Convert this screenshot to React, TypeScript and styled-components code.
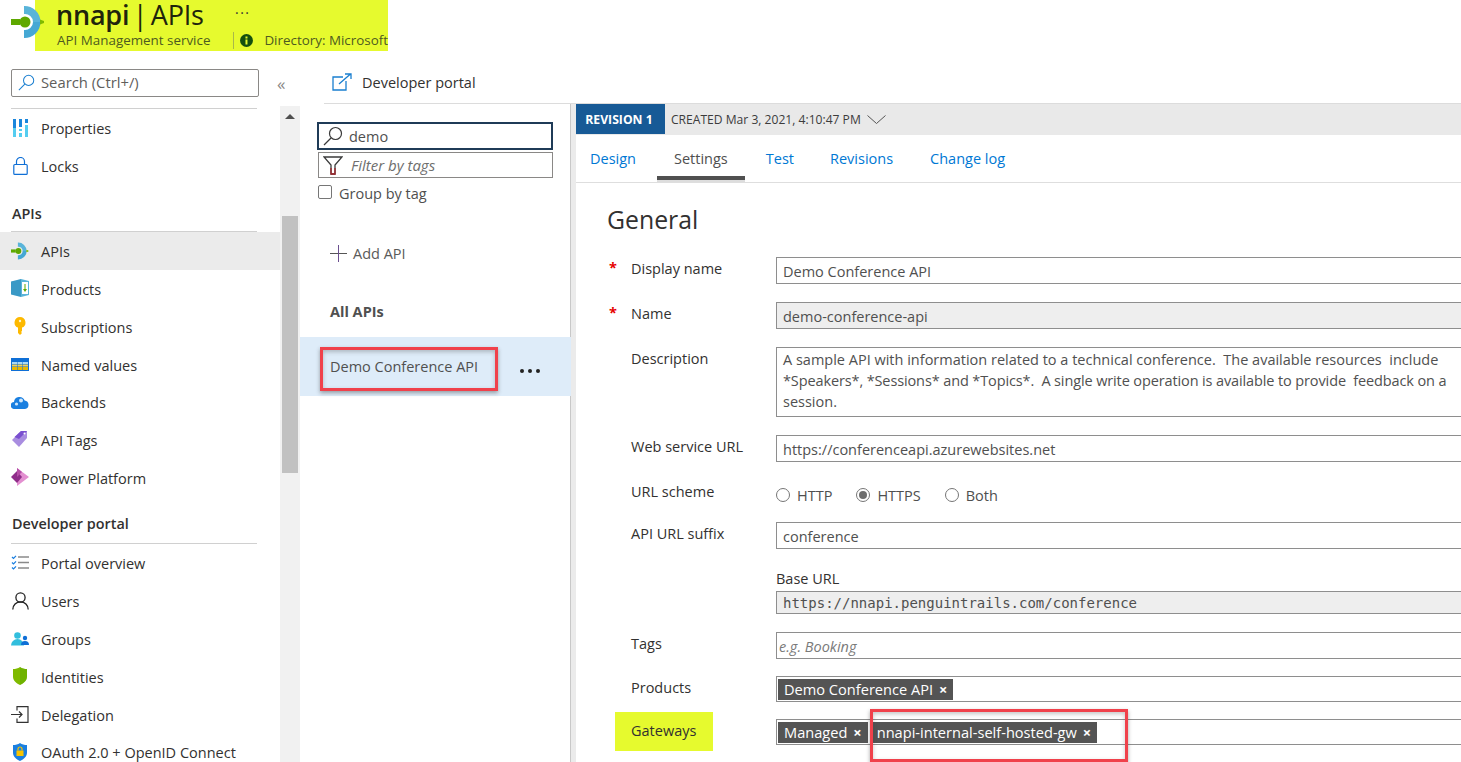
import { ReactNode } from "react";
import styled, { createGlobalStyle } from "styled-components";

const FONT = `"Open Sans", "Noto Sans", sans-serif`;

const GlobalStyle = createGlobalStyle`
  html, body {
    margin: 0;
    padding: 0;
    background: #fff;
  }
  body {
    font-family: ${FONT};
    font-size: 14.5px;
    color: #323130;
  }
  * {
    box-sizing: border-box;
  }
`;

const Page = styled.div`
  position: relative;
  width: 1461px;
  height: 762px;
  overflow: hidden;
  display: flex;
  flex-direction: column;
`;

const Header = styled.header`
  position: relative;
  height: 69px;
  flex: none;
`;

const LogoSlot = styled.div`
  position: absolute;
  left: 11px;
  top: 5px;
  width: 34px;
  height: 34px;
`;

const Highlight = styled.div`
  margin-left: 35px;
  width: 353px;
  height: 51px;
  background: #e6fa2e;
  overflow: hidden;
  padding-left: 22px;
  white-space: nowrap;
`;

const TitleRow = styled.div`
  display: flex;
  height: 29px;
  align-items: center;
`;

const Title = styled.h1`
  margin: 0 0 0 -1px;
  font-size: 27px;
  line-height: 29px;
  font-weight: 400;
  color: #20240c;
  width: 179px;
  letter-spacing: -0.2px;
  word-spacing: -3.4px;
  b {
    font-weight: 600;
  }
`;

const More = styled.span`
  font-size: 14px;
  line-height: 12px;
  letter-spacing: 1.5px;
  color: #333;
  margin-top: -3px;
`;

const SubRow = styled.div`
  display: flex;
  align-items: center;
  height: 22px;
  font-size: 13.4px;
  color: #4e5a20;
`;

const SubName = styled.span`
  width: 177px;
`;

const SubDivider = styled.span`
  width: 1px;
  height: 17px;
  background: #a9b84a;
  margin-right: 6px;
`;

const DirectoryText = styled.span`
  margin-left: 11px;
`;

const Body = styled.div`
  display: flex;
  flex: 1;
  min-height: 0;
`;

const Sidebar = styled.aside`
  width: 300px;
  flex: none;
  display: flex;
  flex-direction: column;
  min-height: 0;
`;

const SearchRow = styled.div`
  display: flex;
  align-items: center;
  height: 28px;
  padding-left: 11px;
  flex: none;
`;

const SearchBox = styled.div`
  width: 248px;
  height: 28px;
  border: 1px solid #8a8886;
  border-radius: 2px;
  display: flex;
  align-items: center;
  gap: 6px;
  padding: 0 0 2px 6px;
  font-size: 14.8px;
  color: #605e5c;
`;

const Collapse = styled.span`
  margin-left: 18px;
  font-size: 17px;
  line-height: 17px;
  color: #8a8886;
`;

const SideBody = styled.div`
  display: flex;
  flex: 1;
  min-height: 0;
  margin-top: 9px;
`;

const Nav = styled.nav`
  width: 280px;
  flex: none;
  overflow: hidden;
  padding-top: 2px;
`;

const NavRule = styled.div`
  height: 1px;
  margin: 0 23px 0 11px;
  background: #d0d0d0;
`;

const NavHeading = styled.div<{ $top: number; $height: number }>`
  margin: ${(p) => p.$top}px 0 0 12px;
  height: ${(p) => p.$height}px;
  font-weight: 600;
  font-size: 14.4px;
  line-height: 20px;
  color: #323130;
`;

const NavItem = styled.div<{ $active?: boolean }>`
  display: flex;
  align-items: center;
  height: 37.8px;
  padding-left: 11px;
  background: ${(p) => (p.$active ? "#ebebeb" : "transparent")};
  color: #323130;
  white-space: nowrap;
`;

const NavIcon = styled.span`
  width: 18px;
  height: 18px;
  margin-right: 12px;
  display: flex;
  align-items: center;
  justify-content: center;
  flex: none;
`;

const NavLabel = styled.span`
  margin-top: 2px;
`;

const Scrollbar = styled.div`
  width: 20px;
  background: #f1f1f1;
  display: flex;
  flex-direction: column;
  align-items: center;
  padding-top: 8px;
`;

const ScrollArrow = styled.span`
  width: 0;
  height: 0;
  border-left: 5px solid transparent;
  border-right: 5px solid transparent;
  border-bottom: 5px solid #505050;
`;

const ScrollThumb = styled.div`
  width: 16px;
  height: 257px;
  margin-top: 97px;
  background: #c1c1c1;
`;

const Main = styled.main`
  flex: 1;
  min-width: 0;
  display: flex;
  flex-direction: column;
  min-height: 0;
`;

const CommandBar = styled.div`
  height: 35px;
  margin-left: 24px;
  flex: none;
  display: flex;
  align-items: flex-start;
  gap: 10px;
  padding: 4px 0 0 8px;
  border-bottom: 1px solid #dcdcdc;
`;

const Split = styled.div`
  display: flex;
  flex: 1;
  min-height: 0;
`;

const ApiList = styled.section`
  position: relative;
  width: 271px;
  flex: none;
  padding-top: 18px;
`;

const ListInputs = styled.div`
  margin-left: 18px;
  width: 235px;
  display: flex;
  flex-direction: column;
  gap: 2px;
`;

const ListSearch = styled.div`
  height: 28px;
  border: 2px solid #1f3b57;
  margin-left: -1px;
  width: 236px;
  display: flex;
  align-items: center;
  padding-left: 4px;
  gap: 6px;
  color: #4f4f4f;
`;

const ListFilter = styled.div`
  height: 26px;
  border: 1px solid #8a8886;
  display: flex;
  align-items: center;
  padding-left: 4px;
  gap: 8px;
  font-size: 15px;
  font-style: italic;
  color: #6e6e6e;
`;

const GroupRow = styled.label`
  display: flex;
  align-items: center;
  margin: 4px 0 0 18px;
  height: 22px;
  gap: 7px;
  color: #4f4f4f;
`;

const CheckBox = styled.span`
  width: 14px;
  height: 14px;
  border: 1px solid #767676;
  border-radius: 2px;
  margin-top: -2px;
`;

const AddApi = styled.div`
  display: flex;
  align-items: center;
  gap: 6px;
  margin: 37px 0 0 30px;
  height: 24px;
  color: #5a5a5a;
`;

const AllApis = styled.div`
  margin: 37px 0 0 30px;
  font-weight: 700;
  line-height: 20px;
  color: #505050;
`;

const ApiRow = styled.div`
  display: flex;
  align-items: center;
  justify-content: space-between;
  height: 59px;
  margin-top: 15px;
  padding: 0 31px 0 30px;
  background: #deecf9;
  color: #505050;
`;

const Dots = styled.span`
  display: flex;
  gap: 4px;
  margin-top: 9px;
`;

const Dot = styled.i`
  width: 4px;
  height: 4px;
  border-radius: 50%;
  background: #222;
`;

const RedBox = styled.div<{ $left: number; $top: number; $width: number; $height: number }>`
  position: absolute;
  left: ${(p) => p.$left}px;
  top: ${(p) => p.$top}px;
  width: ${(p) => p.$width}px;
  height: ${(p) => p.$height}px;
  border: 3px solid #f0414b;
  box-shadow: 0 2px 4px rgba(60, 60, 60, 0.45), inset 0 2px 4px rgba(60, 60, 60, 0.3);
  pointer-events: none;
`;

const Detail = styled.section`
  flex: 1;
  min-width: 0;
  border-left: 5px solid #ebebeb;
  box-shadow: -1px 0 0 #c8c8c8;
  display: flex;
  flex-direction: column;
`;

const RevisionBar = styled.div`
  height: 31px;
  flex: none;
  background: #e9e9e9;
  display: flex;
  align-items: center;
  font-size: 12.1px;
  color: #3c3c3c;
`;

const RevisionBadge = styled.span`
  width: 89px;
  height: 30px;
  margin-bottom: 1px;
  padding-right: 3px;
  background: #175a96;
  color: #fff;
  font-weight: 700;
  font-size: 12.2px;
  display: flex;
  align-items: center;
  justify-content: center;
  margin-right: 6px;
`;

const Chevron = styled.svg`
  margin-left: 6px;
`;

const Tabs = styled.div`
  display: flex;
  height: 48px;
  flex: none;
  gap: 4px;
  border-bottom: 1px solid #dedede;
`;

const Tab = styled.div<{ $active?: boolean; $nudge?: number }>`
  padding: 14px 17px 0;
  margin-left: ${(p) => p.$nudge ?? 0}px;
  line-height: 19px;
  height: 45px;
  color: ${(p) => (p.$active ? "#4f4f4f" : "#0078d4")};
  border-bottom: ${(p) => (p.$active ? "4px solid #505050" : "none")};
  box-shadow: ${(p) => (p.$active ? "0 2px 0 #dddddd" : "none")};
  &:first-child {
    padding-left: 14px;
  }
`;

const Form = styled.div`
  position: relative;
  padding: 18px 0 0 31px;
`;

const FormTitle = styled.h2`
  margin: 0 0 20px;
  font-size: 24.8px;
  line-height: 36px;
  font-weight: 400;
  color: #323130;
`;

const Row = styled.div<{ $gap?: number }>`
  display: grid;
  grid-template-columns: 169px 720px;
  margin-bottom: ${(p) => p.$gap ?? 18}px;
`;

const Label = styled.div<{ $required?: boolean; $offset?: number }>`
  position: relative;
  padding-left: 24px;
  line-height: 20px;
  color: #323130;
  margin-top: ${(p) => p.$offset ?? 2}px;
  &::before {
    content: "${(p) => (p.$required ? "*" : "")}";
    position: absolute;
    left: 2px;
    top: -1px;
    color: #e60000;
    font-weight: 700;
  }
`;

const GatewayLabel = styled.div`
  margin: -7px 0 -7px 8px;
  width: 98px;
  height: 39px;
  background: #e6fa2e;
  padding: 9px 0 0 16px;
  line-height: 20px;
  color: #323130;
`;

const Field = styled.div<{ $disabled?: boolean; $tall?: boolean; $mono?: boolean; $placeholder?: boolean }>`
  border: 1px solid #8e8e8e;
  background: ${(p) => (p.$disabled ? "#eeeeee" : "#fff")};
  min-height: ${(p) => (p.$tall ? "70px" : "27px")};
  line-height: ${(p) => (p.$tall ? "21px" : "23px")};
  padding: ${(p) => (p.$tall ? "1px 6px" : "2px 6px 0")};
  white-space: nowrap;
  color: ${(p) => (p.$placeholder ? "#7a7a7a" : "#505050")};
  font-style: ${(p) => (p.$placeholder ? "italic" : "normal")};
  font-family: ${(p) => (p.$mono ? `"DejaVu Sans Mono", monospace` : "inherit")};
  font-size: ${(p) => (p.$mono ? "14px" : "14.5px")};
  ${(p) => p.$placeholder && "padding-left: 2px;"}
  ${(p) => p.$mono && "min-height: 23px; line-height: 20px; padding-top: 1px;"}
`;

const TightLine = styled.span`
  letter-spacing: -0.12px;
`;

const TagField = styled.div`
  height: 26px;
  border: 1px solid #8e8e8e;
  display: flex;
  align-items: center;
  padding-left: 1px;
  gap: 3px;
`;

const Tag = styled.span`
  background: #545454;
  color: #fff;
  height: 21px;
  line-height: 21px;
  padding: 0 6px;
  font-size: 14.6px;
  white-space: nowrap;
`;

const TagClose = styled.b`
  margin-left: 6px;
  font-weight: 700;
`;

const RadioRow = styled.div`
  display: flex;
  align-items: center;
  height: 24px;
  color: #4f4f4f;
`;

const Radio = styled.span<{ $on?: boolean }>`
  width: 14px;
  height: 14px;
  border: 1px solid #767676;
  border-radius: 50%;
  margin-right: 7px;
  display: flex;
  align-items: center;
  justify-content: center;
  &::after {
    content: "";
    width: 8px;
    height: 8px;
    border-radius: 50%;
    background: ${(p) => (p.$on ? "#6e6e6e" : "transparent")};
  }
`;

const RadioText = styled.span<{ $space: number }>`
  margin-right: ${(p) => p.$space}px;
`;

const BaseLabel = styled.div`
  line-height: 20px;
  margin-bottom: 2px;
  color: #323130;
`;

const ApimIcon = ({ size }: { size: number }) => (
  <svg width={size} height={size} viewBox="0 0 34 34">
    <path d="M13 1A16 16 0 0 1 29.500 17H22A8 8 0 0 0 13 9z" fill="#59b4d9" />
    <path d="M13 33A16 16 0 0 0 29.500 17H22A8 8 0 0 1 13 25z" fill="#45a8d4" />
    <path d="M0 14h9v6H0z" fill="#5ea800" />
    <circle cx="14" cy="17" r="5.500" fill="#5ea800" />
    <path d="M29 14.500l4 1.500v2l-4 1.500z" fill="#7fba00" />
  </svg>
);

const SearchGlyph = ({ size, color }: { size: number; color: string }) => (
  <svg width={size} height={size} viewBox="0 0 20 20" fill="none" stroke={color} strokeWidth="1.2">
    <circle cx="12.500" cy="7.500" r="6" />
    <path d="M8 12L1 19" />
  </svg>
);

const PropertiesIcon = () => (
  <svg width="15" height="18" viewBox="0 0 15 18">
    <path d="M0 0h3v9H0zM6 0h3v8H6zM12 0h3v4h-3z" fill="#1a86dc" />
    <path d="M0 9h3v9H0zM6 10h3v2H6zM6 14h3v4H6zM12 6h3v12h-3z" fill="#55cdf0" />
  </svg>
);

const LockIcon = () => (
  <svg width="15" height="18" viewBox="0 0 15 18" fill="none" stroke="#0f6fd6" strokeWidth="1.2">
    <rect x=".8" y="7.500" width="13.400" height="9.900" rx="1" />
    <path d="M3.500 7.500V4.500a4 4 0 0 1 8 0v3" />
  </svg>
);

const ProductsIcon = () => (
  <svg width="18" height="18" viewBox="0 0 18 18">
    <path d="M0 2.500L10 0v18L0 15.500z" fill="#3999c6" />
    <path d="M10 0l8 2v14l-8 2z" fill="#59b4d9" />
    <path d="M11 3h6v12h-6z" fill="#fff" />
    <path d="M13.500 5h1v5h1.500l-2 3-2-3h1.500z" fill="#5ea800" />
  </svg>
);

const KeyIcon = () => (
  <svg width="12" height="18" viewBox="0 0 12 18">
    <path d="M6 0a5.500 5.500 0 0 1 2 10.600V14l-1 1 1 1-2 2-2-2V10.600A5.500 5.500 0 0 1 6 0z" fill="#fdb900" />
    <circle cx="6" cy="4" r="1.200" fill="#fff3c4" />
  </svg>
);

const TableIcon = () => (
  <svg width="18" height="13" viewBox="0 0 18 13">
    <path d="M0 0h18v13H0z" fill="#0f6fd6" />
    <path d="M1 4h5v2H1zM6.500 4h5v2h-5zM12 4h5v2h-5z" fill="#a8d8f5" />
    <path d="M1 6.500h5v2H1zM6.500 6.500h5v2h-5zM12 6.500h5v2h-5z" fill="#f2d15c" />
    <path d="M1 9h5v3H1zM6.500 9h5v3h-5zM12 9h5v3h-5z" fill="#e8b800" />
  </svg>
);

const CloudIcon = () => (
  <svg width="18" height="14" viewBox="0 0 18 14">
    <path d="M3.500 14A3.500 3.500 0 0 1 3 7a5.500 5.500 0 0 1 10.600-1.500A4.300 4.300 0 0 1 14 14z" fill="#1a7fe0" />
    <circle cx="10" cy="5.500" r="2" fill="#cfe7fb" />
    <circle cx="5.500" cy="9" r="1.600" fill="#cfe7fb" />
  </svg>
);

const TagIcon = () => (
  <svg width="16" height="17" viewBox="0 0 16 17">
    <path d="M9 0h6v7l-8 9-7-7z" fill="#a98de0" />
    <path d="M9 0h6L7 8 2.500 6z" fill="#7a4fd0" />
    <circle cx="12.500" cy="2.600" r="1" fill="#fff" />
  </svg>
);

const PowerIcon = () => (
  <svg width="18" height="18" viewBox="0 0 18 18">
    <path d="M6 0l12 9-12 9z" fill="#e38fd0" />
    <path d="M0 9l6-6 5 6-5 6z" fill="#8f2d8a" />
    <path d="M6 0l5 4-5 5z" fill="#b64fa8" />
  </svg>
);

const ChecklistIcon = () => (
  <svg width="18" height="15" viewBox="0 0 18 15" fill="none">
    <path d="M1 2l1.500 1.500L5 .8M1 7.500L2.500 9 5 6.300M1 12.500L2.500 14 5 11.300" stroke="#1a7fe0" strokeWidth="1.2" />
    <path d="M7 2h11M7 7.500h11M7 13h11" stroke="#8a8a8a" strokeWidth="1.3" />
  </svg>
);

const UserIcon = () => (
  <svg width="17" height="18" viewBox="0 0 17 18" fill="none" stroke="#222" strokeWidth="1.3">
    <circle cx="8.500" cy="5.500" r="4.600" />
    <path d="M.8 17.500a7.700 7.700 0 0 1 15.400 0" />
  </svg>
);

const GroupIcon = () => (
  <svg width="18" height="14" viewBox="0 0 18 14">
    <circle cx="6.500" cy="3.500" r="3.300" fill="#32bedd" />
    <path d="M0 13.500a6.500 6.500 0 0 1 13 0z" fill="#32bedd" />
    <circle cx="14" cy="6" r="2.200" fill="#0f6fd6" />
    <path d="M10 13a4 4 0 0 1 8 0z" fill="#0f6fd6" />
  </svg>
);

const ShieldIcon = () => (
  <svg width="14" height="18" viewBox="0 0 14 18">
    <path d="M7 0c2 1.500 4.500 2 7 2v7.500c0 4-3 6.800-7 8.500C3 16.300 0 13.500 0 9.500V2c2.500 0 5-.5 7-2z" fill="#7fba00" />
    <path d="M7 0c2 1.500 4.500 2 7 2v7.500c0 4-3 6.800-7 8.500z" fill="#5ea800" opacity="0.45" />
  </svg>
);

const DelegationIcon = () => (
  <svg width="18" height="17" viewBox="0 0 18 17" fill="none" stroke="#333" strokeWidth="1.2">
    <path d="M6 4.500V.6h11v15.800H6v-3.900" />
    <path d="M0 8.500h11M8 5.500l3 3-3 3" />
  </svg>
);

const OAuthIcon = () => (
  <svg width="14" height="18" viewBox="0 0 14 18">
    <path d="M7 0c2 1.500 4.500 2 7 2v7.500c0 4-3 6.800-7 8.500C3 16.300 0 13.500 0 9.500V2c2.500 0 5-.5 7-2z" fill="#1a7fe0" />
    <rect x="3.500" y="7.500" width="7" height="5.500" fill="#f8c400" />
    <path d="M5 7.500V6a2 2 0 0 1 4 0v1.500" fill="none" stroke="#f8c400" strokeWidth="1.200" />
  </svg>
);

const ExternalIcon = () => (
  <svg width="20" height="18" viewBox="0 0 20 18" fill="none" stroke="#1a7fd0" strokeWidth="1.300">
    <path d="M11 4H1v13h13V8" />
    <path d="M7 11L18.500 1M13 1h6v5" />
  </svg>
);

const FilterIcon = () => (
  <svg width="20" height="19" viewBox="0 0 20 19" fill="none" strokeWidth="1.300">
    <path d="M1 1h18l-7 8v9H8V9z" stroke="#3b3b3b" />
    <path d="M8 12v6h4v-6" stroke="#a4262c" />
  </svg>
);

const PlusIcon = () => (
  <svg width="17" height="17" viewBox="0 0 17 17" fill="none" strokeWidth="1">
    <path d="M0 8.500h17" stroke="#555" />
    <path d="M8.500 0v17" stroke="#6b4f8f" />
  </svg>
);

const InfoIcon = () => (
  <svg width="13" height="13" viewBox="0 0 13 13">
    <circle cx="6.500" cy="6.500" r="6.500" fill="#14500f" />
    <path d="M5.500 5.500h2V10.500h-2zM5.500 2.500h2v2h-2z" fill="#e6fa2e" />
  </svg>
);

type NavEntry = { label: string; icon: ReactNode; active?: boolean };

const firstItems: NavEntry[] = [
  { label: "Properties", icon: <PropertiesIcon /> },
  { label: "Locks", icon: <LockIcon /> },
];

const apiItems: NavEntry[] = [
  { label: "APIs", icon: <ApimIcon size={18} />, active: true },
  { label: "Products", icon: <ProductsIcon /> },
  { label: "Subscriptions", icon: <KeyIcon /> },
  { label: "Named values", icon: <TableIcon /> },
  { label: "Backends", icon: <CloudIcon /> },
  { label: "API Tags", icon: <TagIcon /> },
  { label: "Power Platform", icon: <PowerIcon /> },
];

const portalItems: NavEntry[] = [
  { label: "Portal overview", icon: <ChecklistIcon /> },
  { label: "Users", icon: <UserIcon /> },
  { label: "Groups", icon: <GroupIcon /> },
  { label: "Identities", icon: <ShieldIcon /> },
  { label: "Delegation", icon: <DelegationIcon /> },
  { label: "OAuth 2.0 + OpenID Connect", icon: <OAuthIcon /> },
];

const NavList = ({ items }: { items: NavEntry[] }) => (
  <>
    {items.map((item) => (
      <NavItem key={item.label} $active={item.active}>
        <NavIcon>{item.icon}</NavIcon>
        <NavLabel>{item.label}</NavLabel>
      </NavItem>
    ))}
  </>
);

const App = () => {
  return (
    <Page>
      <GlobalStyle />
      <Header>
        <Highlight>
          <TitleRow>
            <Title>
              <b>nnapi</b> | APIs
            </Title>
            <More>···</More>
          </TitleRow>
          <SubRow>
            <SubName>API Management service</SubName>
            <SubDivider />
            <InfoIcon />
            <DirectoryText>Directory: Microsoft</DirectoryText>
          </SubRow>
        </Highlight>
        <LogoSlot>
          <ApimIcon size={34} />
        </LogoSlot>
      </Header>
      <Body>
        <Sidebar>
          <SearchRow>
            <SearchBox>
              <SearchGlyph size={17} color="#1a7fd0" />
              Search (Ctrl+/)
            </SearchBox>
            <Collapse>«</Collapse>
          </SearchRow>
          <SideBody>
            <Nav>
              <NavRule />
              <NavList items={firstItems} />
              <NavHeading $top={19.2} $height={27}>APIs</NavHeading>
              <NavRule />
              <NavList items={apiItems} />
              <NavHeading $top={18} $height={28.7}>Developer portal</NavHeading>
              <NavRule />
              <NavList items={portalItems} />
            </Nav>
            <Scrollbar>
              <ScrollArrow />
              <ScrollThumb />
            </Scrollbar>
          </SideBody>
        </Sidebar>
        <Main>
          <CommandBar>
            <ExternalIcon />
            Developer portal
          </CommandBar>
          <Split>
            <ApiList>
              <ListInputs>
                <ListSearch>
                  <SearchGlyph size={20} color="#3a3a3a" />
                  demo
                </ListSearch>
                <ListFilter>
                  <FilterIcon />
                  Filter by tags
                </ListFilter>
              </ListInputs>
              <GroupRow>
                <CheckBox />
                Group by tag
              </GroupRow>
              <AddApi>
                <PlusIcon />
                Add API
              </AddApi>
              <AllApis>All APIs</AllApis>
              <ApiRow>
                Demo Conference API
                <Dots>
                  <Dot />
                  <Dot />
                  <Dot />
                </Dots>
              </ApiRow>
              <RedBox $left={20} $top={243} $width={178} $height={44} />
            </ApiList>
            <Detail>
              <RevisionBar>
                <RevisionBadge>REVISION 1</RevisionBadge>
                CREATED Mar 3, 2021, 4:10:47 PM
                <Chevron width="19" height="10" viewBox="0 0 19 10" fill="none" stroke="#555" strokeWidth="1">
                  <path d="M.5.500l9 8 9-8" />
                </Chevron>
              </RevisionBar>
              <Tabs>
                <Tab>Design</Tab>
                <Tab $active>Settings</Tab>
                <Tab>Test</Tab>
                <Tab $nudge={-2}>Revisions</Tab>
                <Tab $nudge={-1}>Change log</Tab>
              </Tabs>
              <Form>
                <FormTitle>General</FormTitle>
                <Row>
                  <Label $required>Display name</Label>
                  <Field>Demo Conference API</Field>
                </Row>
                <Row>
                  <Label $required>Name</Label>
                  <Field $disabled>demo-conference-api</Field>
                </Row>
                <Row>
                  <Label>Description</Label>
                  <Field $tall>
                    A sample API with information related to a technical conference.&nbsp; The available resources&nbsp; include
                    <br />
                    <TightLine>
                      *Speakers*, *Sessions* and *Topics*.&nbsp; A single write operation is available to provide&nbsp; feedback on a
                    </TightLine>
                    <br />
                    session.
                  </Field>
                </Row>
                <Row $gap={21}>
                  <Label>Web service URL</Label>
                  <Field>https://conferenceapi.azurewebsites.net</Field>
                </Row>
                <Row $gap={15}>
                  <Label $offset={-1}>URL scheme</Label>
                  <RadioRow>
                    <Radio />
                    <RadioText $space={24}>HTTP</RadioText>
                    <Radio $on />
                    <RadioText $space={24}>HTTPS</RadioText>
                    <Radio />
                    <RadioText $space={0}>Both</RadioText>
                  </RadioRow>
                </Row>
                <Row $gap={20}>
                  <Label>API URL suffix</Label>
                  <Field>conference</Field>
                </Row>
                <Row>
                  <Label />
                  <div>
                    <BaseLabel>Base URL</BaseLabel>
                    <Field $disabled $mono>
                      https://nnapi.penguintrails.com/conference
                    </Field>
                  </div>
                </Row>
                <Row $gap={17}>
                  <Label>Tags</Label>
                  <Field $placeholder>e.g. Booking</Field>
                </Row>
                <Row $gap={17}>
                  <Label>Products</Label>
                  <TagField>
                    <Tag>
                      Demo Conference API
                      <TagClose>×</TagClose>
                    </Tag>
                  </TagField>
                </Row>
                <Row>
                  <GatewayLabel>Gateways</GatewayLabel>
                  <TagField>
                    <Tag>
                      Managed
                      <TagClose>×</TagClose>
                    </Tag>
                    <Tag>
                      nnapi-internal-self-hosted-gw
                      <TagClose>×</TagClose>
                    </Tag>
                  </TagField>
                </Row>
                <RedBox $left={294} $top={526} $width={258} $height={53} />
              </Form>
            </Detail>
          </Split>
        </Main>
      </Body>
    </Page>
  );
};

export default App;
